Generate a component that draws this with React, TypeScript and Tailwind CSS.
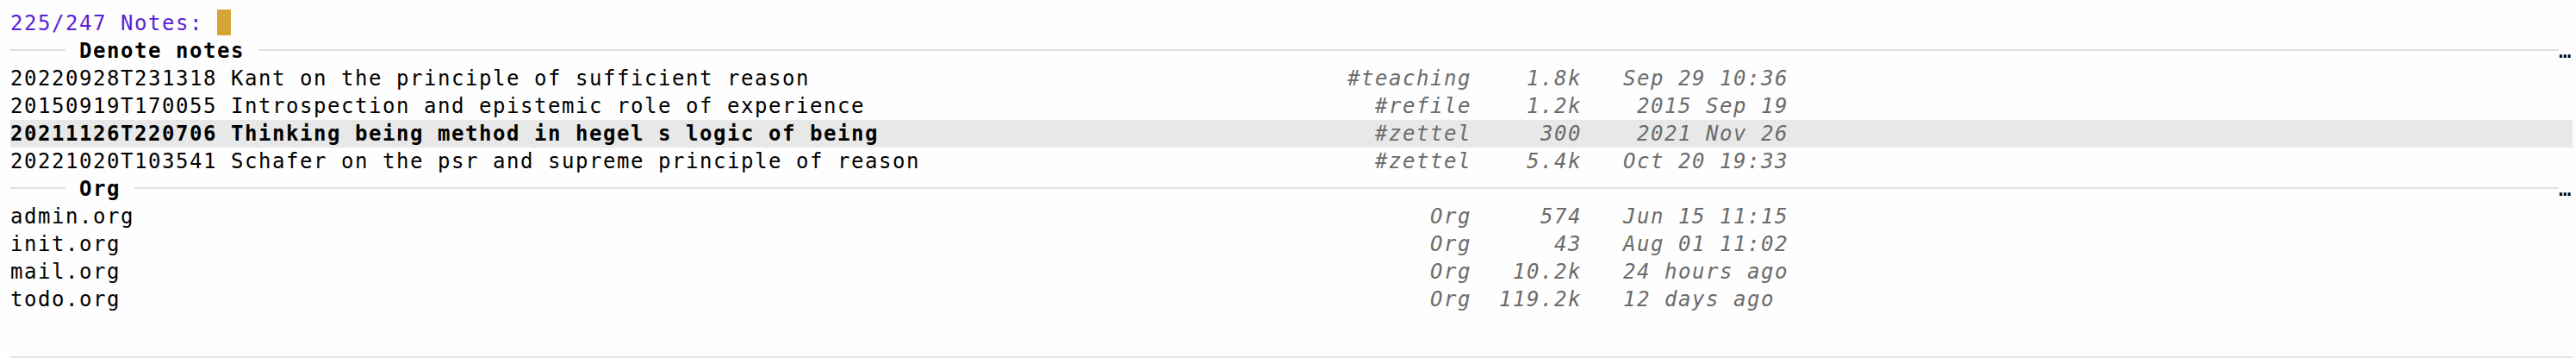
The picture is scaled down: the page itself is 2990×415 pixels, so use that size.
import React from "react";

type Row = { title: string; tag: string; size: string; date: string; current?: boolean };

const denote: Row[] = [
  { title: "20220928T231318 Kant on the principle of sufficient reason", tag: "#teaching", size: "1.8k", date: "Sep 29 10:36" },
  { title: "20150919T170055 Introspection and epistemic role of experience", tag: "#refile", size: "1.2k", date: "2015 Sep 19" },
  { title: "20211126T220706 Thinking being method in hegel s logic of being", tag: "#zettel", size: "300", date: "2021 Nov 26", current: true },
  { title: "20221020T103541 Schafer on the psr and supreme principle of reason", tag: "#zettel", size: "5.4k", date: "Oct 20 19:33" },
];

const org: Row[] = [
  { title: "admin.org", tag: "Org", size: "574", date: "Jun 15 11:15" },
  { title: "init.org", tag: "Org", size: "43", date: "Aug 01 11:02" },
  { title: "mail.org", tag: "Org", size: "10.2k", date: "24 hours ago" },
  { title: "todo.org", tag: "Org", size: "119.2k", date: "12 days ago" },
];

function Header({ title }: { title: string }) {
  return (
    <div className="h-[32px] flex items-start">
      <div className="w-[64px] h-[2px] mt-[14px] bg-[#e0e0e0] flex-none" />
      <span className="ml-[16px] font-bold whitespace-pre flex-none">{title}</span>
      <div className="flex-1 h-[2px] mt-[14px] ml-[16px] bg-[#e0e0e0]" />
      <span className="w-[16px] flex-none">…</span>
    </div>
  );
}

function DenoteRow({ r }: { r: Row }) {
  return (
    <div className={`h-[32px] flex items-baseline ${r.current ? "bg-[#e8e8e8] font-bold" : ""}`}>
      <span className="flex-1 whitespace-pre overflow-hidden">{r.title}</span>
      <span className="w-[300px] flex-none text-right italic font-normal text-[#6b6b6b] whitespace-pre">{r.tag}</span>
      <span className="w-[128px] flex-none text-right italic font-normal text-[#6b6b6b] whitespace-pre">{r.size}</span>
      <span className="w-[240px] flex-none text-right italic font-normal text-[#6b6b6b] whitespace-pre">{r.date}</span>
      <span className="w-[910px] flex-none" />
    </div>
  );
}

function OrgRow({ r }: { r: Row }) {
  return (
    <div className="h-[32px] flex items-baseline">
      <span className="flex-1 whitespace-pre overflow-hidden">{r.title}</span>
      <span className="w-[300px] flex-none text-right italic text-[#6b6b6b] whitespace-pre">{r.tag}</span>
      <span className="w-[128px] flex-none text-right italic text-[#6b6b6b] whitespace-pre">{r.size}</span>
      <span className="w-[240px] flex-none pl-[48px] text-left italic text-[#6b6b6b] whitespace-pre">{r.date}</span>
      <span className="w-[910px] flex-none" />
    </div>
  );
}

export default function App() {
  return (
    <div className="w-[2990px] h-[415px] overflow-hidden bg-[#fefefe] pl-[12px] pr-[4px] pt-[11px] flex flex-col font-['DejaVu_Sans_Mono',monospace] text-[24px] leading-[32px] tracking-[1.55px] text-black">
      <div className="h-[32px] flex items-start">
        <span className="text-[#5b21d9] whitespace-pre">225/247 Notes: </span>
        <span className="w-[16px] h-[30px] bg-[#d4a536] flex-none" />
      </div>
      <Header title="Denote notes" />
      {denote.map((r) => (
        <DenoteRow key={r.title} r={r} />
      ))}
      <Header title="Org" />
      {org.map((r) => (
        <OrgRow key={r.title} r={r} />
      ))}
      <div className="mt-auto h-[2px] bg-[#e5e5e5] flex-none" />
    </div>
  );
}
